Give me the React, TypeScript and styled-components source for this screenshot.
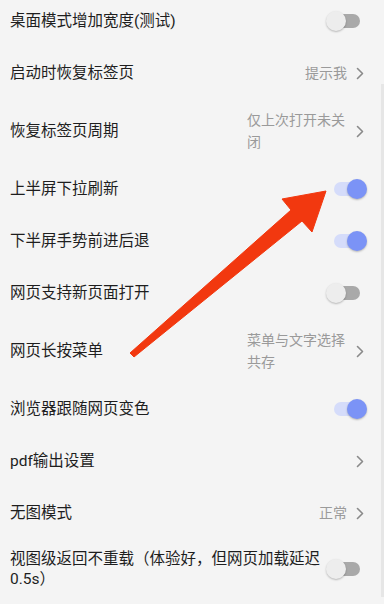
import React from "react";
import styled, { createGlobalStyle } from "styled-components";

const Global = createGlobalStyle`
  html, body { margin: 0; padding: 0; background: #f4f4f4; }
  body { width: 384px; height: 604px; overflow: hidden; font-family: Roboto, "Noto Sans CJK SC", sans-serif; }
`;

const Page = styled.div`
  position: relative;
  width: 384px;
  height: 604px;
  overflow: hidden;
  background: #f4f4f4;
`;

const List = styled.div`
  display: flex;
  flex-direction: column;
  margin-top: -5px;
`;

const Row = styled.div`
  display: flex;
  align-items: center;
  min-height: 52px;
  box-sizing: border-box;
  padding: 10px 17px 10px 10px;
`;

const Title = styled.div`
  flex: 1;
  min-width: 0;
  font-size: 15.5px;
  line-height: 20px;
  color: #1e1e1e;
`;

const Value = styled.div`
  max-width: 100px;
  font-size: 14px;
  line-height: 22px;
  color: #9a9a9a;
`;

const Chevron = styled.svg`
  flex: none;
  width: 8px;
  height: 13px;
  margin-left: 9px;
  margin-right: 3px;
`;

const ToggleBox = styled.div`
  position: relative;
  flex: none;
  width: 41px;
  height: 22px;
  margin-left: 4px;
`;

const Track = styled.div<{ $on: boolean }>`
  position: absolute;
  left: 8px;
  top: 4px;
  width: 26px;
  height: 14px;
  border-radius: 7px;
  background: ${(p) => (p.$on ? "#d5dcfa" : "#a9a9a9")};
`;

const Knob = styled.div<{ $on: boolean }>`
  position: absolute;
  top: 1px;
  left: ${(p) => (p.$on ? "21px" : "0px")};
  width: 20px;
  height: 20px;
  border-radius: 50%;
  background: ${(p) => (p.$on ? "#7b93f6" : "#ededed")};
  box-shadow: 0 1px 2px rgba(0, 0, 0, 0.25);
`;

const Scrollbar = styled.div`
  position: absolute;
  right: 0;
  top: 84px;
  width: 3px;
  height: 513px;
  background: #e6e6e6;
`;

const ArrowSvg = styled.svg`
  position: absolute;
  left: 0;
  top: 0;
  width: 384px;
  height: 604px;
  pointer-events: none;
`;

function Toggle({ on }: { on: boolean }) {
  return (
    <ToggleBox>
      <Track $on={on} />
      <Knob $on={on} />
    </ToggleBox>
  );
}

function Arrow() {
  return (
    <Chevron viewBox="0 0 8 13">
      <polyline points="1.5,1.5 6.5,6.5 1.5,11.5" fill="none" stroke="#8a8a8a" strokeWidth="1.6" strokeLinecap="round" strokeLinejoin="round" />
    </Chevron>
  );
}

type Item =
  | { title: string; toggle: boolean }
  | { title: string; value?: string };

const items: Item[] = [
  { title: "桌面模式增加宽度(测试)", toggle: false },
  { title: "启动时恢复标签页", value: "提示我" },
  { title: "恢复标签页周期", value: "仅上次打开未关闭" },
  { title: "上半屏下拉刷新", toggle: true },
  { title: "下半屏手势前进后退", toggle: true },
  { title: "网页支持新页面打开", toggle: false },
  { title: "网页长按菜单", value: "菜单与文字选择共存" },
  { title: "浏览器跟随网页变色", toggle: true },
  { title: "pdf输出设置", value: "" },
  { title: "无图模式", value: "正常" },
  { title: "视图级返回不重载（体验好，但网页加载延迟0.5s）", toggle: false },
];

export default function App() {
  return (
    <Page>
      <Global />
      <List>
        {items.map((it) => (
          <Row key={it.title}>
            <Title>{it.title}</Title>
            {"toggle" in it ? (
              <Toggle on={it.toggle} />
            ) : (
              <>
                {it.value ? <Value>{it.value}</Value> : null}
                <Arrow />
              </>
            )}
          </Row>
        ))}
      </List>
      <Scrollbar />
      <ArrowSvg viewBox="0 0 384 604">
        <polygon
          points="326,191 282,199 291,210 130,353 134,357 302,221 312,232"
          fill="#f2380f"
          stroke="#f2380f"
          strokeWidth="1"
          strokeLinejoin="round"
        />
      </ArrowSvg>
    </Page>
  );
}
